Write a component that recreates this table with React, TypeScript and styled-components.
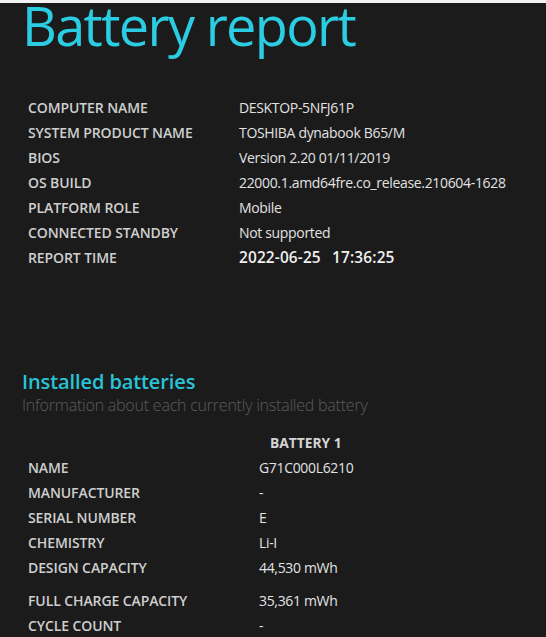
import React from 'react'
import styled, { createGlobalStyle } from 'styled-components'

const GlobalStyle = createGlobalStyle`
  html, body {
    margin: 0;
    padding: 0;
    background: #1b1b1b;
  }
  body {
    font-family: 'Open Sans', 'Noto Sans', sans-serif;
    border-top: 3px solid #f2f2f2;
    overflow: hidden;
  }
`

const Page = styled.div`
  height: 634px;
  background: #1b1b1b;
  overflow: hidden;
`

const Title = styled.h1`
  margin: 0;
  padding-left: 22px;
  font-size: 54px;
  font-weight: 400;
  line-height: 54px;
  margin-top: -5px;
  color: #2bcde3;
  letter-spacing: -1.65px;
`

const InfoTable = styled.div<{ $labelWidth: number }>`
  display: grid;
  grid-template-columns: ${(p) => p.$labelWidth}px 1fr;
  padding-left: 28px;
`

const Label = styled.div<{ $gap?: number }>`
  height: 25px;
  line-height: 25px;
  font-size: 14px;
  font-weight: 600;
  color: #cfcfcf;
  letter-spacing: -0.1px;
  white-space: nowrap;
  margin-top: ${(p) => p.$gap ?? 0}px;
`

const Value = styled.div<{ $strong?: boolean; $gap?: number }>`
  height: 25px;
  line-height: 25px;
  font-size: ${(p) => (p.$strong ? 15.4 : 14)}px;
  font-weight: ${(p) => (p.$strong ? 600 : 400)};
  color: ${(p) => (p.$strong ? '#f0f0f0' : '#e2e2e2')};
  letter-spacing: ${(p) => (p.$strong ? '0.15px' : '-0.33px')};
  word-spacing: ${(p) => (p.$strong ? '1.5px' : '0')};
  white-space: pre;
  margin-top: ${(p) => p.$gap ?? 0}px;
`

const ColumnHead = styled.div`
  height: 25px;
  line-height: 25px;
  margin-top: 2px;
  font-size: 13.8px;
  font-weight: 700;
  color: #d4d4d4;
  padding-left: 11px;
`

const Section = styled.section`
  padding-left: 22px;
`

const SectionTitle = styled.h2`
  margin: 0;
  font-size: 20px;
  font-weight: 600;
  line-height: 26px;
  color: #2ac3d6;
  letter-spacing: -0.1px;
`

const SectionSub = styled.p`
  margin: 0;
  font-size: 16px;
  font-weight: 300;
  line-height: 20px;
  color: #5b5b5b;
  letter-spacing: -0.22px;
`

const Spacer = styled.div<{ $h: number }>`
  height: ${(p) => p.$h}px;
`

const systemRows: [string, string][] = [
  ['COMPUTER NAME', 'DESKTOP-5NFJ61P'],
  ['SYSTEM PRODUCT NAME', 'TOSHIBA dynabook B65/M'],
  ['BIOS', 'Version 2.20 01/11/2019'],
  ['OS BUILD', '22000.1.amd64fre.co_release.210604-1628'],
  ['PLATFORM ROLE', 'Mobile'],
  ['CONNECTED STANDBY', 'Not supported'],
  ['REPORT TIME', '2022-06-25  17:36:25'],
]

const batteryRows: [string, string, number][] = [
  ['NAME', 'G71C000L6210', 0],
  ['MANUFACTURER', '-', 0],
  ['SERIAL NUMBER', 'E', 0],
  ['CHEMISTRY', 'Li-I', 0],
  ['DESIGN CAPACITY', '44,530 mWh', 0],
  ['FULL CHARGE CAPACITY', '35,361 mWh', 8],
  ['CYCLE COUNT', '-', 0],
]

export default function App() {
  return (
    <Page>
      <GlobalStyle />
      <Title>Battery report</Title>
      <Spacer $h={43} />
      <InfoTable $labelWidth={211}>
        {systemRows.map(([k, v], i) => (
          <React.Fragment key={k}>
            <Label>{k}</Label>
            <Value $strong={i === systemRows.length - 1}>{v}</Value>
          </React.Fragment>
        ))}
      </InfoTable>
      <Spacer $h={99} />
      <Section>
        <SectionTitle>Installed batteries</SectionTitle>
        <SectionSub>Information about each currently installed battery</SectionSub>
      </Section>
      <Spacer $h={13} />
      <InfoTable $labelWidth={231}>
        <div />
        <ColumnHead>BATTERY 1</ColumnHead>
        {batteryRows.map(([k, v, g]) => (
          <React.Fragment key={k}>
            <Label $gap={g}>{k}</Label>
            <Value $gap={g}>{v}</Value>
          </React.Fragment>
        ))}
      </InfoTable>
    </Page>
  )
}
